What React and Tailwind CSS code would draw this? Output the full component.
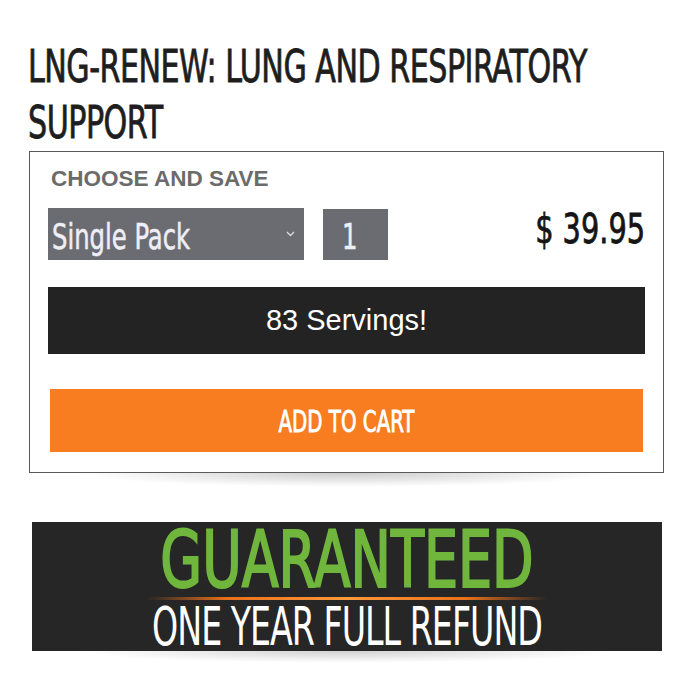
import React from "react";

const cond = "font-['Liberation_Sans_Narrow','DejaVu_Sans_Condensed',sans-serif]";
const arial = "font-['Liberation_Sans',Arial,sans-serif]";

function Chevron() {
  return (
    <svg width="9" height="6" viewBox="0 0 9 6" className="shrink-0">
      <path d="M1 1l3.5 3.5L8 1" fill="none" stroke="#d8d8de" strokeWidth="1.4" />
    </svg>
  );
}

export default function App() {
  return (
    <div className="w-[700px] h-[700px] bg-white pl-[28px] pr-[36px] pt-[39px]">
      {/* Product title */}
      <h1 className={`${cond} text-[33.5px] leading-[56px] tracking-[-0.5px] text-[#1e1e1e] [-webkit-text-stroke:0.6px_#1e1e1e]`}>
        <span className="block scale-y-[1.35]">LNG-RENEW: LUNG AND RESPIRATORY</span>
        <span className="block scale-y-[1.35]">SUPPORT</span>
      </h1>

      {/* Purchase box */}
      <div className="ml-[1px] border border-[#5a5a5a] px-[18px] pt-[15px] pb-[20px] bg-white">
        <p className={`${arial} font-bold text-[22.5px] leading-[24px] text-[#6b6b6b] ml-[3px]`}>
          CHOOSE AND SAVE
        </p>

        <div className="mt-[17px] flex items-center">
          <div className="w-[256px] h-[52px] bg-[#6b6c72] flex items-center justify-between pl-[4px] pr-[9px]">
            <span className={`${cond} block mt-[4px] text-[27px] leading-none text-[#eeeef5] scale-y-[1.3] [-webkit-text-stroke:0.4px_#eeeef5]`}>Single Pack</span>
            <Chevron />
          </div>
          <div className={`${cond} ml-[19px] w-[65px] h-[51px] bg-[#6b6c72] flex items-center pl-[19px] text-[27px] text-[#eeeef5]`}>
            <span className="block mt-[4px] leading-none scale-y-[1.3] [-webkit-text-stroke:0.4px_#eeeef5]">1</span>
          </div>
          <div className={`${cond} ml-auto mb-[10px] text-[32px] text-[#151515] leading-none scale-y-[1.28] [-webkit-text-stroke:0.6px_#151515]`}>$ 39.95</div>
        </div>

        <div className={`${arial} mt-[27px] h-[67px] bg-[#232323] flex items-center justify-center text-white text-[29px]`}>
          83 Servings!
        </div>

        <button className={`${cond} mt-[35px] mx-[2px] w-[calc(100%-4px)] h-[63px] bg-[#f87c20] text-white flex items-center justify-center`}>
          <span className="block mt-[3px] text-[22px] leading-none scale-y-[1.38] [-webkit-text-stroke:0.6px_#ffffff]">ADD TO CART</span>
        </button>
      </div>
      <div className="mx-auto w-[540px] h-[14px] bg-[radial-gradient(ellipse_at_top,rgba(0,0,0,0.2),transparent_70%)]" />

      {/* Guarantee banner */}
      <div className="mt-[35px] ml-[4px] w-[630px] h-[129px] bg-[#262626] flex flex-col items-center pt-[14.5px]">
        <div className={`${cond} text-[60px] leading-[46px] text-[#70b63d] scale-y-[1.3] [-webkit-text-stroke:1.6px_#70b63d]`}>GUARANTEED</div>
        <div className="mt-[14px] w-[400px] h-[3px] rounded-full bg-[linear-gradient(90deg,transparent,#e8701a_20%,#ff9a3a_50%,#e8701a_80%,transparent)]" />
        <div className={`${cond} mt-[14px] text-[37px] leading-[28px] tracking-[-1px] text-white scale-y-[1.44]`}>ONE YEAR FULL REFUND</div>
      </div>
      <div className="mx-auto w-[540px] h-[12px] bg-[radial-gradient(ellipse_at_top,rgba(0,0,0,0.18),transparent_70%)]" />
    </div>
  );
}
